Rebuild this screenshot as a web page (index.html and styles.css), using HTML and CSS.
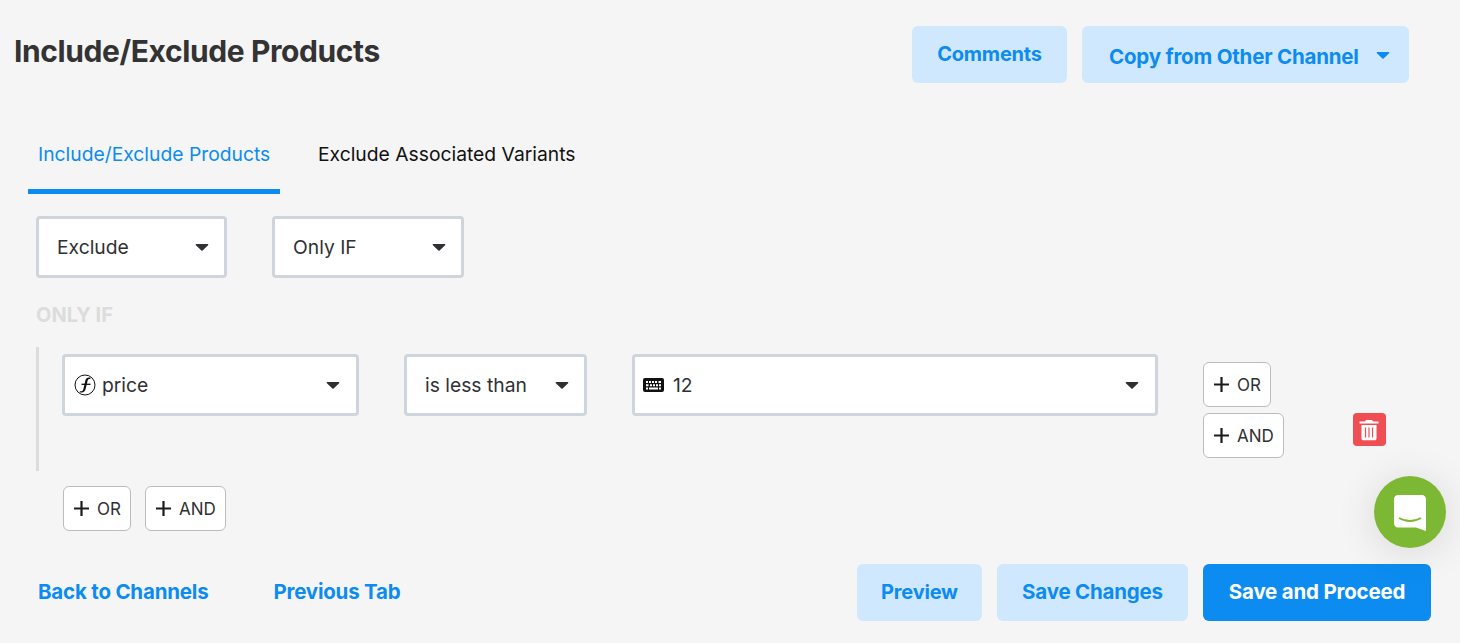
FILE: index.html
```html
<!DOCTYPE html>
<html lang="en">
<head>
    <meta charset="UTF-8">
    <title>Include/Exclude Products</title>
    <link rel="stylesheet" href="styles.css">
</head>
<body>
    <div class="page">
        <div class="header">
            <h1>Include/Exclude Products</h1>
            <div class="header-actions">
                <button class="btn btn-light btn-comments">Comments</button>
                <button class="btn btn-light btn-copy">
                    <span>Copy from Other Channel</span>
                    <svg class="caret" width="14" height="9" viewBox="0 0 14 9"><path d="M1.500 1h11c.8 0 1.100.7.600 1.200L7.600 7.600c-.3.300-.9.300-1.200 0L.9 2.200C.4 1.700.7 1 1.500 1z" fill="#0c8cf0"/></svg>
                </button>
            </div>
        </div>

        <div class="tabs">
            <div class="tab active">Include/Exclude Products</div>
            <div class="tab">Exclude Associated Variants</div>
        </div>

        <div class="top-selects">
            <div class="select select-mode"><span>Exclude</span><svg class="caret" width="14" height="9" viewBox="0 0 14 9"><path d="M1.500 1h11c.8 0 1.100.7.600 1.200L7.600 7.600c-.3.300-.9.300-1.200 0L.9 2.200C.4 1.700.7 1 1.500 1z" fill="#2f3033"/></svg></div>
            <div class="select select-cond"><span>Only IF</span><svg class="caret" width="14" height="9" viewBox="0 0 14 9"><path d="M1.500 1h11c.8 0 1.100.7.600 1.200L7.600 7.600c-.3.300-.9.300-1.200 0L.9 2.200C.4 1.700.7 1 1.500 1z" fill="#2f3033"/></svg></div>
        </div>

        <div class="section-label">ONLY IF</div>

        <div class="rule">
            <div class="select select-field">
                <svg class="fn-icon" width="22" height="22" viewBox="0 0 22 22">
                    <circle cx="11" cy="11" r="10" fill="none" stroke="#111" stroke-width="1"/>
                    <path d="M16.500 3.800c-2.400-.9-4.300 0-5.100 2.500l-2 8.600c-.5 2-1.300 2.800-3.400 2.300l-.4 1c3.400 1 5.300-.4 6-3.200l2-8.300c.3-1.300 1.200-1.800 2.700-1.500z" fill="#111"/>
                    <path d="M7.500 10.300h9" stroke="#111" stroke-width="1.300"/>
                </svg>
                <span>price</span>
                <svg class="caret" width="14" height="9" viewBox="0 0 14 9"><path d="M1.500 1h11c.8 0 1.100.7.600 1.200L7.600 7.600c-.3.300-.9.300-1.200 0L.9 2.200C.4 1.700.7 1 1.500 1z" fill="#2f3033"/></svg>
            </div>
            <div class="select select-op"><span>is less than</span><svg class="caret" width="14" height="9" viewBox="0 0 14 9"><path d="M1.500 1h11c.8 0 1.100.7.600 1.200L7.600 7.600c-.3.300-.9.300-1.200 0L.9 2.200C.4 1.700.7 1 1.500 1z" fill="#2f3033"/></svg></div>
            <div class="select select-value">
                <svg class="kb-icon" width="21" height="14" viewBox="0 0 21 14">
                    <rect width="21" height="14" rx="2" fill="#111"/>
                    <path d="M3 3h2v2H3zM6 3h2v2H6zM9 3h2v2H9zM12 3h2v2h-2zM15.500 3h2.500v2h-2.500zM3 6.300h2.500v2H3zM7 6.300h2v2H7zM10 6.300h2v2h-2zM13 6.300h2v2h-2zM16 6.300h2v2h-2zM3 9.500h2v2H3zM6 9.500h9v2H6zM16 9.500h2v2h-2z" fill="#fff"/>
                </svg>
                <span>12</span>
                <svg class="caret" width="14" height="9" viewBox="0 0 14 9"><path d="M1.500 1h11c.8 0 1.100.7.600 1.200L7.600 7.600c-.3.300-.9.300-1.200 0L.9 2.200C.4 1.700.7 1 1.500 1z" fill="#2f3033"/></svg>
            </div>
            <div class="rule-buttons">
                <button class="add-btn"><svg class="plus" width="15" height="15" viewBox="0 0 15 15"><path d="M7.500 0v15M0 7.500h15" stroke="#1c1c1c" stroke-width="2.200"/></svg>OR</button>
                <button class="add-btn"><svg class="plus" width="15" height="15" viewBox="0 0 15 15"><path d="M7.500 0v15M0 7.500h15" stroke="#1c1c1c" stroke-width="2.200"/></svg>AND</button>
            </div>
            <button class="delete-btn">
                <svg width="20" height="22" viewBox="0 0 20 22">
                    <path d="M7 1h6l1 1.500h5.500v2H.5v-2H6zM2.500 6h15v13.500c0 1-.8 1.800-1.800 1.800H4.300c-1 0-1.800-.8-1.800-1.800z" fill="#fff"/>
                    <path d="M6.500 8.500v10M10 8.500v10M13.500 8.500v10" stroke="#f04e55" stroke-width="1.200"/>
                </svg>
            </button>
        </div>

        <div class="group-buttons">
            <button class="add-btn"><svg class="plus" width="15" height="15" viewBox="0 0 15 15"><path d="M7.500 0v15M0 7.500h15" stroke="#1c1c1c" stroke-width="2.200"/></svg>OR</button>
            <button class="add-btn"><svg class="plus" width="15" height="15" viewBox="0 0 15 15"><path d="M7.500 0v15M0 7.500h15" stroke="#1c1c1c" stroke-width="2.200"/></svg>AND</button>
        </div>

        <div class="footer">
            <div class="footer-links">
                <a class="link">Back to Channels</a>
                <a class="link">Previous Tab</a>
            </div>
            <div class="footer-actions">
                <button class="btn btn-light btn-preview">Preview</button>
                <button class="btn btn-light btn-save">Save Changes</button>
                <button class="btn btn-primary btn-proceed">Save and Proceed</button>
            </div>
        </div>
    </div>

    <div class="chat-bubble">
        <svg width="32" height="36" viewBox="0 0 32 36">
            <path d="M4 0h24c2.200 0 4 1.800 4 4v32l-10-3.500H4c-2.200 0-4-1.800-4-4V4C0 1.800 1.800 0 4 0z" fill="#fff"/>
            <path d="M5 23c6.500 4 15.500 4 22 0" fill="none" stroke="#7db834" stroke-width="1.800"/>
        </svg>
    </div>
</body>
</html>
```

FILE: styles.css
```css
* {
    box-sizing: border-box;
}

body {
    margin: 0;
    height: 643px;
    overflow: hidden;
    background-color: #f5f5f5;
    font-family: "Inter", "Liberation Sans", sans-serif;
    color: #2f3033;
}

.page {
    display: flex;
    flex-direction: column;
    width: 1460px;
}

.header {
    display: flex;
    justify-content: space-between;
    height: 83px;
    padding: 26px 51px 0 14px;
}

h1 {
    margin: 7px 0 0;
    font-size: 30px;
    line-height: 36px;
    font-weight: 700;
    letter-spacing: -0.4px;
    color: #333;
}

.header-actions {
    display: flex;
    gap: 15px;
}

.btn {
    height: 57px;
    padding: 0 0 2px;
    border: none;
    border-radius: 6px;
    font-family: inherit;
    font-size: 20.5px;
    font-weight: 700;
    letter-spacing: -0.2px;
    cursor: pointer;
}

.btn-light {
    background-color: #d0e8fd;
    color: #0c8cf0;
}

.btn-primary {
    background-color: #0c8cf0;
    color: #fff;
}

.btn-comments {
    width: 155px;
    font-size: 20px;
}

.btn-copy {
    display: flex;
    align-items: center;
    justify-content: space-between;
    width: 327px;
    padding: 3px 19px 0 27px;
}

.btn-copy .caret {
    margin-top: -2px;
}

.tabs {
    display: flex;
    height: 111px;
    margin-left: 28px;
    padding-top: 44px;
    gap: 28px;
}

.tab {
    height: 67px;
    padding: 16px 10px 0;
    font-size: 19.3px;
    line-height: 23px;
    color: #111;
}

.tab.active {
    width: 252px;
    white-space: nowrap;
    color: #0c8cf0;
    border-bottom: 5px solid #0c8cf0;
}

.select {
    display: flex;
    align-items: center;
    height: 62px;
    padding: 0 15px 0 18px;
    background-color: #fff;
    border: 3px solid #cfd5dd;
    border-radius: 4px;
    font-size: 19.3px;
}

.select span {
    flex: 1;
}

.top-selects {
    display: flex;
    gap: 45px;
    margin: 22px 0 0 36px;
}

.select-mode {
    width: 191px;
}

.select-cond {
    width: 192px;
}

.section-label {
    margin: 27px 0 0 36px;
    font-size: 20px;
    line-height: 20px;
    font-weight: 700;
    color: #dcdcdc;
}

.rule {
    display: flex;
    align-items: flex-start;
    height: 124px;
    margin: 22px 0 0 36px;
    padding: 7px 0 0 23px;
    border-left: 3px solid #dcdcdc;
}

.select-field {
    width: 297px;
    padding-left: 9px;
    padding-right: 16px;
}

.fn-icon {
    margin-right: 6px;
}

.select-op {
    width: 183px;
    margin-left: 45px;
}

.select-value {
    width: 526px;
    margin-left: 45px;
    padding-left: 8px;
    padding-right: 16px;
}

.kb-icon {
    margin-right: 9px;
}

.rule-buttons {
    display: flex;
    flex-direction: column;
    align-items: flex-start;
    gap: 6px;
    margin: 8px 0 0 45px;
}

.add-btn {
    display: flex;
    align-items: center;
    height: 45px;
    padding: 0 9px 0 10px;
    background-color: #fff;
    border: 1px solid #bcbcbc;
    border-radius: 6px;
    font-family: inherit;
    font-size: 17px;
    color: #2f3033;
    cursor: pointer;
}

.plus {
    margin-right: 8px;
}

.delete-btn {
    display: flex;
    align-items: center;
    justify-content: center;
    width: 33px;
    height: 33px;
    margin: 59px 0 0 69px;
    padding: 0;
    background-color: #f04e55;
    border: none;
    border-radius: 4px;
    cursor: pointer;
}

.group-buttons {
    display: flex;
    gap: 14px;
    margin: 15px 0 0 63px;
}

.footer {
    display: flex;
    justify-content: space-between;
    margin-top: 33px;
    padding: 0 29px 0 38px;
}

.footer-links {
    display: flex;
    align-items: center;
    gap: 65px;
    padding-bottom: 2px;
}

.link {
    font-size: 20.5px;
    font-weight: 700;
    letter-spacing: -0.2px;
    color: #0c8cf0;
    cursor: pointer;
}

.footer-actions {
    display: flex;
    gap: 15px;
}

.btn-preview {
    width: 125px;
    font-size: 20px;
}

.btn-save {
    width: 191px;
}

.btn-proceed {
    width: 228px;
}

.chat-bubble {
    position: fixed;
    left: 1374px;
    top: 476px;
    display: flex;
    align-items: center;
    justify-content: center;
    width: 72px;
    height: 72px;
    padding: 1px 0 0 0;
    background-color: #7db834;
    border-radius: 50%;
    box-shadow: 0 4px 40px rgba(0, 0, 0, 0.12);
}
```
